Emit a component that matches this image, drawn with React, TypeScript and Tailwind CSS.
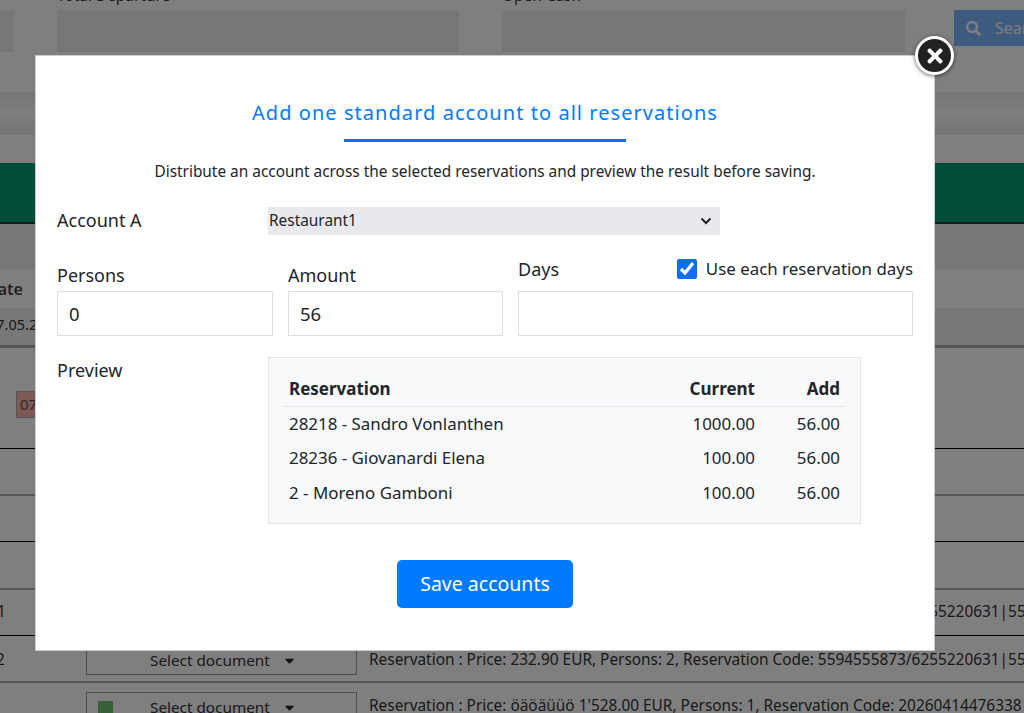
import { FaCaretDown, FaSearch, FaTimes } from "react-icons/fa";

const previewRows = [
  { name: "28218 - Sandro Vonlanthen", current: "1000.00", add: "56.00" },
  { name: "28236 - Giovanardi Elena", current: "100.00", add: "56.00" },
  { name: "2 - Moreno Gamboni", current: "100.00", add: "56.00" },
];

function SelectDocument({ marked }: { marked?: boolean }) {
  return (
    <div className="relative flex h-[30px] w-[271px] shrink-0 items-center border border-[#999] pl-[63px] text-[15.3px]">
      {marked && <span className="absolute left-[11px] top-[8px] h-[15px] w-[15px] bg-[#6cc070]" />}
      <span>Select document</span>
      <FaCaretDown className="ml-[12px] text-[#222]" size={15} />
    </div>
  );
}

function Background() {
  return (
    <div className="relative h-[713px] w-[1024px] overflow-hidden bg-white text-[15.4px] text-[#333]">
      <div className="-mt-[8px] flex h-[100px]">
        <div className="mt-[18px] h-[42px] w-[14px] shrink-0 bg-[#eeeeee]" />
        <div className="ml-[43px] w-[402px] shrink-0">
          <div className="h-[18px] -translate-y-[3px] text-[15.4px] leading-[14px]">Total Departure</div>
          <div className="h-[42px] border-b-2 border-[#e4e4e4] bg-[#eeeeee]" />
        </div>
        <div className="ml-[43px] w-[403px] shrink-0">
          <div className="h-[18px] -translate-y-[3px] text-[15.4px] leading-[14px]">Open Cash</div>
          <div className="h-[42px] border-b-2 border-[#e4e4e4] bg-[#eeeeee]" />
        </div>
        <div className="ml-[49px] mt-[18px] flex h-[36px] w-[120px] shrink-0 items-center bg-[#7eb4ff] pl-[12px] text-white">
          <FaSearch size={15} />
          <span className="ml-[14px] text-[16px]">Search</span>
        </div>
      </div>
      <div className="h-[43px] bg-gradient-to-b from-[#ececec] via-[#fdfdfd] to-[#e8e8e8]" />
      <div className="h-[28px] bg-white" />
      <div className="h-[61px] border-b-2 border-[#333] bg-[#009c72]" />
      <div className="h-[46px] bg-[#eeeeee]" />
      <div className="h-[38px] pt-[8px] text-[16px] font-semibold leading-[22px] text-[#444]">
        <span className="-ml-[14px]">Date</span>
      </div>
      <div className="h-[40px] border-b-[3px] border-[#aaaaaa] bg-[#f0f0f0] pt-[5px] text-[14.5px] leading-[22px]">
        <span className="-ml-[12px]">07.05.2026</span>
      </div>
      <div className="relative h-[101px] border-b border-black">
        <span className="absolute left-[16px] top-[43px] flex h-[27px] w-[40px] items-center border border-[#aaaaaa] bg-[#ffb0b0] pl-[3px] text-[15px] text-[#555555]">07</span>
      </div>
      <div className="h-[47px] border-b-2 border-[#aaaaaa]" />
      <div className="h-[46px] border-b border-black" />
      <div className="h-[48px] border-b-2 border-[#aaaaaa]" />
      <div className="flex h-[46px] items-start border-b border-black pt-[12px] leading-[20px]">
        <span className="w-[86px] shrink-0 -translate-x-[3px]">1</span>
        <SelectDocument />
        <span className="ml-[12px] whitespace-nowrap">Reservation : Price: 232.90 EUR, Persons: 2, Reservation Code: 5594555873/6255220631|5594555873</span>
      </div>
      <div className="flex h-[47px] items-start border-b-2 border-[#aaaaaa] pt-[9px] leading-[20px]">
        <span className="mt-[5px] w-[86px] shrink-0 -translate-x-[4px]">2</span>
        <SelectDocument />
        <span className="ml-[12px] mt-[5px] whitespace-nowrap">Reservation : Price: 232.90 EUR, Persons: 2, Reservation Code: 5594555873/6255220631|5594555873</span>
      </div>
      <div className="flex items-start pl-[86px] pt-[9px] leading-[20px]">
        <SelectDocument marked />
        <span className="ml-[12px] mt-[4px] whitespace-nowrap">Reservation : Price: öäöäüüö 1'528.00 EUR, Persons: 1, Reservation Code: 20260414476338</span>
      </div>
    </div>
  );
}

export default function App() {
  return (
    <div className="relative h-[713px] w-[1024px] overflow-hidden font-['Noto_Sans',sans-serif]">
      <Background />
      <div className="absolute inset-0 bg-black/50">
        <div className="absolute left-[35px] top-[55px] h-[596px] w-[900px] border border-[#cccccc] bg-white px-[21px] pt-[43px] text-[#212529]">
          <button className="absolute -right-[20px] -top-[20px] flex h-[39px] w-[39px] items-center justify-center rounded-full border-[3px] border-white bg-[#222222] text-white shadow-[0_1px_4px_rgba(0,0,0,0.6)]">
            <FaTimes size={22} />
          </button>
          <h2 className="text-center text-[20px] leading-[27px] tracking-[1.05px] text-[#007bff]">
            Add one standard account to all reservations
          </h2>
          <div className="mx-auto mt-[13px] h-[3px] w-[282px] bg-[#0d6efd]" />
          <p className="mt-[19px] text-center text-[15.4px] leading-[21px]">
            Distribute an account across the selected reservations and preview the result before saving.
          </p>
          <div className="mt-[25px] grid grid-cols-[211px_1fr] items-center">
            <label className="pb-[2px] text-[18px] leading-[26px]">Account A</label>
            <div className="relative w-[452px]">
              <select className="block h-[28px] w-full appearance-none bg-[#e9e9ed] pl-[1px] text-[15.4px]" defaultValue="Restaurant1">
                <option>Restaurant1</option>
              </select>
              <svg viewBox="0 0 12 8" className="absolute right-[8px] top-[10px] h-[8px] w-[12px] text-[#222]" fill="none" stroke="currentColor" strokeWidth="2">
                <path d="M1.500 1.500 6 6l4.500-4.500" />
              </svg>
            </div>
          </div>
          <div className="mt-[21px] flex items-end gap-[15px]">
            <div className="w-[216px]">
              <label className="block text-[18px] leading-[26px]">Persons</label>
              <input
                className="mt-[3px] block h-[45px] w-full border border-[#dddddd] px-[11px] text-[18.5px]"
                defaultValue="0"
              />
            </div>
            <div className="w-[215px]">
              <label className="block text-[18px] leading-[26px]">Amount</label>
              <input
                className="mt-[3px] block h-[45px] w-full border border-[#dddddd] px-[11px] text-[18.5px]"
                defaultValue="56"
              />
            </div>
            <div className="w-[395px]">
              <div className="mb-[9px] flex items-center justify-between">
                <label className="text-[18px] leading-[26px]">Days</label>
                <label className="flex items-center gap-[9px] text-[16.9px] leading-[22px]">
                  <input type="checkbox" defaultChecked className="h-[20px] w-[20px] accent-[#0d6efd]" />
                  Use each reservation days
                </label>
              </div>
              <input className="block h-[45px] w-full border border-[#dddddd] px-[11px] text-[18.5px]" />
            </div>
          </div>
          <div className="mt-[21px] grid grid-cols-[211px_1fr] items-start">
            <label className="text-[18px] leading-[26px]">Preview</label>
            <div className="h-[167px] w-[593px] border border-[#e5e5e5] bg-[#f8f9fa] px-[14px] pt-[14px]">
              <table className="w-full text-[16.9px]">
                <thead>
                  <tr className="h-[34px] border-b border-[#e5e7eb] text-[17px] font-bold">
                    <th className="px-[6px] text-left">Reservation</th>
                    <th className="w-[120px] px-[6px] text-right">Current</th>
                    <th className="w-[85px] px-[6px] text-right">Add</th>
                  </tr>
                </thead>
                <tbody>
                  {previewRows.map((row) => (
                    <tr key={row.name} className="h-[34.5px]">
                      <td className="px-[6px]">{row.name}</td>
                      <td className="px-[6px] text-right">{row.current}</td>
                      <td className="px-[6px] text-right">{row.add}</td>
                    </tr>
                  ))}
                </tbody>
              </table>
            </div>
          </div>
          <div className="mt-[36px] flex justify-center">
            <button className="h-[48px] w-[176px] rounded-[5px] bg-[#007bff] text-[19.5px] text-white">Save accounts</button>
          </div>
        </div>
      </div>
    </div>
  );
}
